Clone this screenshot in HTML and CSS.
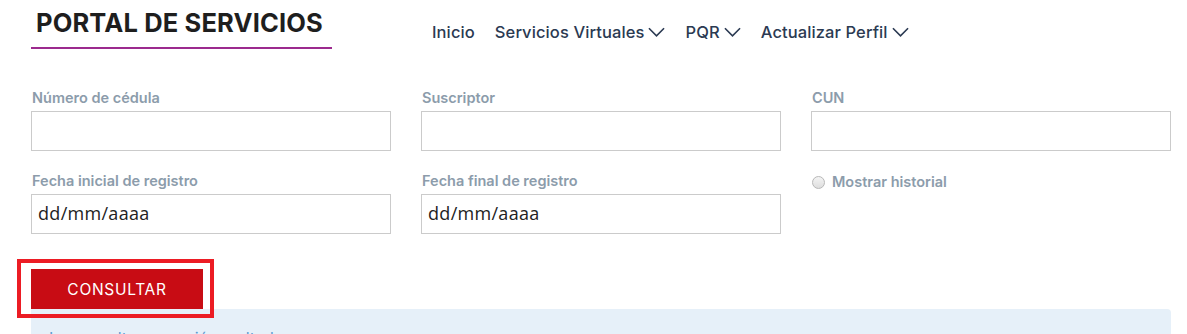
FILE: index.html
```html
<!DOCTYPE html>
<html lang="es">
<head>
<meta charset="utf-8">
<title>Portal de Servicios</title>
<link rel="stylesheet" href="styles.css">
</head>
<body>
<header class="header">
  <div class="brand"><h1 class="brand-title">PORTAL DE SERVICIOS</h1></div>
  <nav class="nav">
    <a class="nav-item" href="#">Inicio</a>
    <a class="nav-item" href="#">Servicios Virtuales<svg class="chev" viewBox="0 0 18 10" width="17" height="10"><path d="M1 1l8 8 8-8" fill="none" stroke="currentColor" stroke-width="1.7"/></svg></a>
    <a class="nav-item" href="#">PQR<svg class="chev" viewBox="0 0 18 10" width="17" height="10"><path d="M1 1l8 8 8-8" fill="none" stroke="currentColor" stroke-width="1.7"/></svg></a>
    <a class="nav-item" href="#">Actualizar Perfil<svg class="chev" viewBox="0 0 18 10" width="17" height="10"><path d="M1 1l8 8 8-8" fill="none" stroke="currentColor" stroke-width="1.7"/></svg></a>
  </nav>
</header>
<main class="main">
  <form class="form">
    <div class="field">
      <label class="label">Número de cédula</label>
      <div class="input"></div>
    </div>
    <div class="field">
      <label class="label">Suscriptor</label>
      <div class="input"></div>
    </div>
    <div class="field">
      <label class="label">CUN</label>
      <div class="input"></div>
    </div>
    <div class="field">
      <label class="label">Fecha inicial de registro</label>
      <div class="input date">dd/mm/aaaa</div>
    </div>
    <div class="field">
      <label class="label">Fecha final de registro</label>
      <div class="input date">dd/mm/aaaa</div>
    </div>
    <div class="field check">
      <span class="radio"></span><span class="label">Mostrar historial</span>
    </div>
  </form>
  <div class="actions">
    <div class="highlight"><button class="btn" type="button">CONSULTAR</button></div>
  </div>
  <div class="alert">La consulta no arrojó resultados</div>
</main>
</body>
</html>
```
FILE: styles.css
```css
* { box-sizing: border-box; }
html, body { margin: 0; padding: 0; background: #fff; }
body { font-family: Inter, "Noto Sans", sans-serif; color: #2c3a4b; width: 1187px; height: 334px; overflow: hidden; }

.header { display: flex; align-items: flex-start; padding-left: 31px; height: 89px; }
.brand { width: 301px; height: 49px; border-bottom: 2px solid #9c2a8e; padding-left: 5px; }
.brand-title { margin: 0; padding-top: 8px; font-size: 25.5px; line-height: 30px; font-weight: 700; color: #1e1e1e; letter-spacing: 0.15px; }

.nav { display: flex; margin-left: 100px; padding-top: 21px; gap: 20px; }
.nav-item { display: flex; align-items: center; color: #2b3a52; text-decoration: none; font-size: 16.5px; font-weight: 500; line-height: 22px; letter-spacing: 0.1px; }
.chev { margin-left: 4px; color: #2b3a52; }

.main { padding-left: 31px; width: 1171px; }
.form { display: grid; grid-template-columns: 360px 360px 360px; column-gap: 30px; row-gap: 21px; }
.field { display: flex; flex-direction: column; }
.label { font-size: 14.5px; font-weight: 600; color: #8c9cab; line-height: 18px; height: 22px; padding-left: 1px; }
.input { height: 40px; border: 1px solid #cbcbcb; background: #fff; }
.date { font-family: "Open Sans", sans-serif; font-size: 18px; font-weight: 500; color: #222; padding-left: 6px; line-height: 37px; letter-spacing: 0.3px; }
.check { flex-direction: row; align-items: center; height: 18px; padding-left: 1px; margin-top: 1px; }
.check .label { height: 18px; }
.radio { width: 13px; height: 13px; border-radius: 50%; border: 1px solid #b8b8b8; background: linear-gradient(#f4f4f4, #dedede); margin-right: 6px; }

.actions { margin-top: 25px; margin-left: -14px; }
.highlight { display: inline-block; border: 4px solid #ec1c24; padding: 6px 7px 5px 10px; }
.btn { display: block; width: 172px; height: 40px; border: 0; background: #c80c14; color: #fff; font-family: Inter, sans-serif; font-size: 15.5px; font-weight: 400; letter-spacing: 0.7px; }

.alert { margin-top: -9px; height: 40px; background: #e6f0f9; border-radius: 0 4px 0 0; color: #5d9bd1; font-size: 16px; padding: 19px 18px; line-height: 20px; }
```
